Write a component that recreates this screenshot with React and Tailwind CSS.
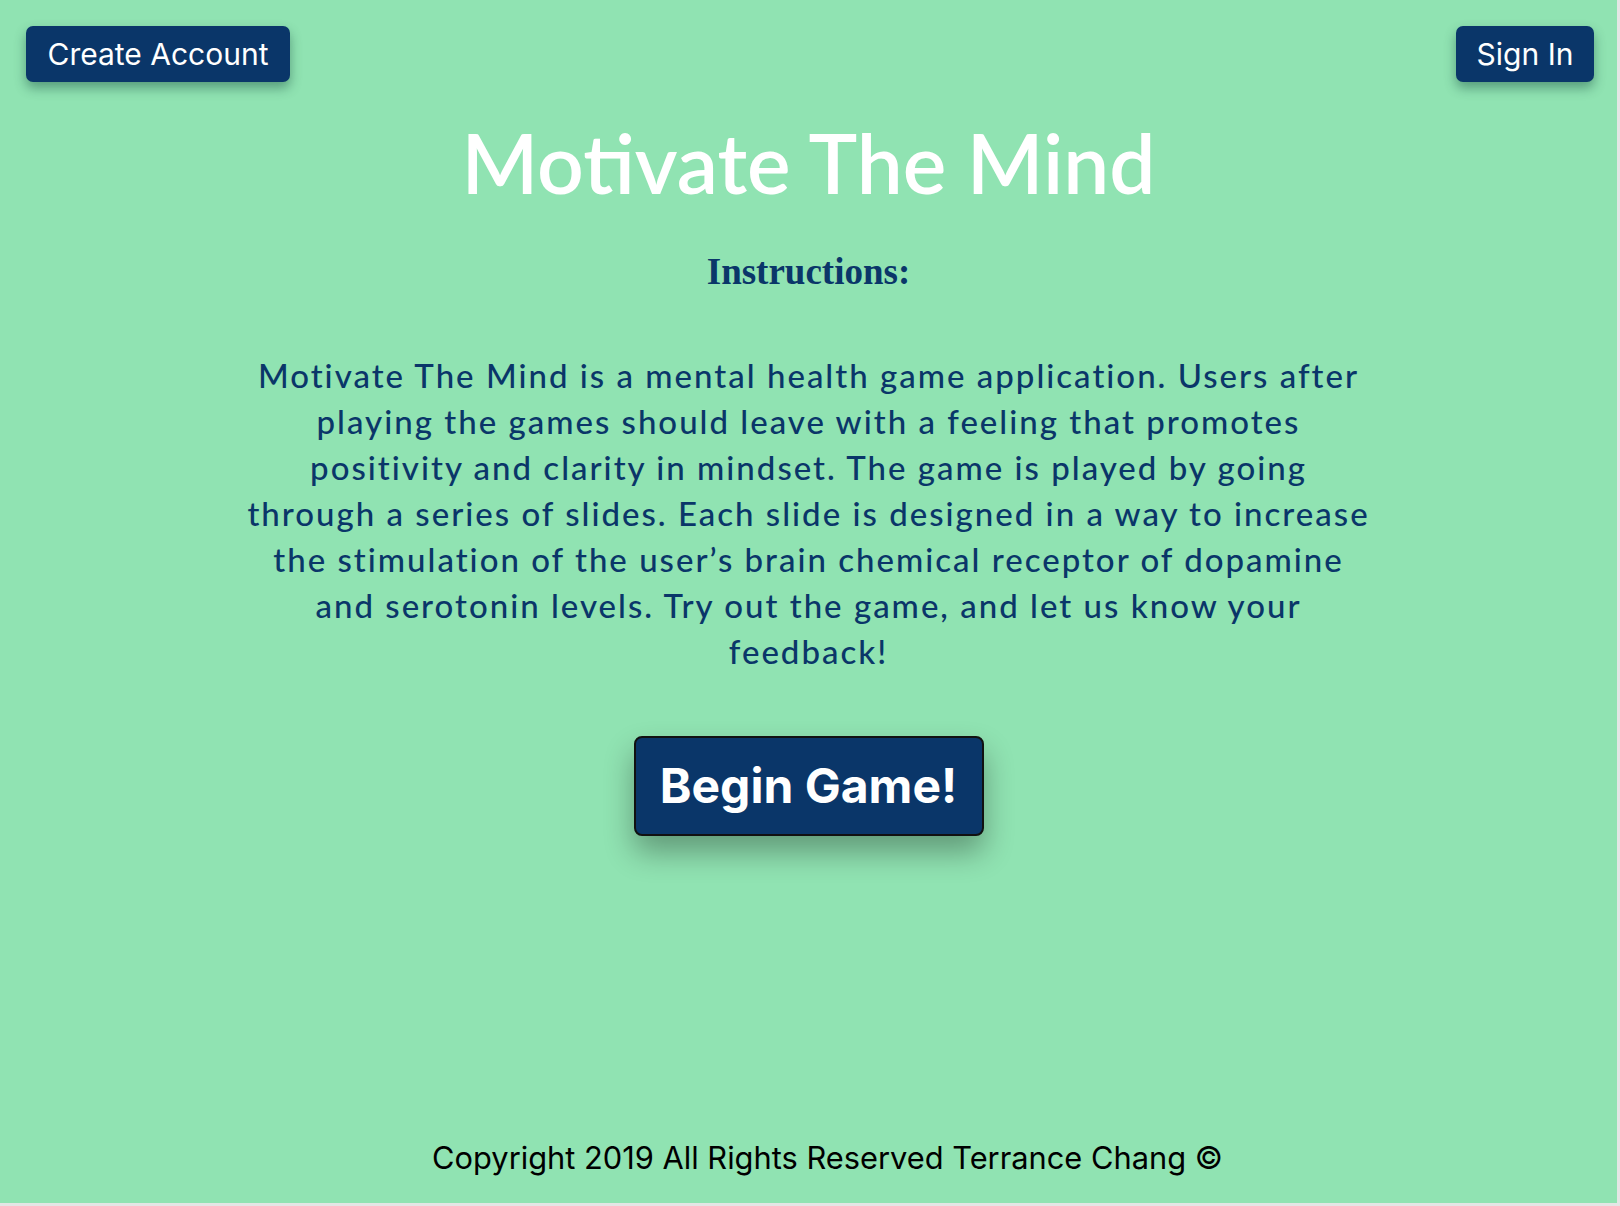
import React from 'react';

const lines = [
    'Motivate The Mind is a mental health game application. Users after',
    'playing the games should leave with a feeling that promotes',
    'positivity and clarity in mindset. The game is played by going',
    'through a series of slides. Each slide is designed in a way to increase',
    "the stimulation of the user\u2019s brain chemical receptor of dopamine",
    'and serotonin levels. Try out the game, and let us know your',
    'feedback!',
];

export default function App() {
    return (
        <div className="w-[1620px] h-[1206px] bg-[#e4e6e5] pr-[3px] pb-[3px]">
            <div className="h-full w-full bg-[#90e3b2] flex flex-col">
                {/* top bar with account buttons */}
                <div className="flex justify-between pl-[26px] pr-[23px] pt-[26px] font-['Inter',sans-serif]">
                    <button className="h-[56px] w-[264px] rounded-[7px] bg-[#0a3669] text-white text-[30px] shadow-[0_6px_12px_rgba(20,70,60,0.45)]">
                        Create Account
                    </button>
                    <button className="h-[56px] w-[138px] rounded-[7px] bg-[#0a3669] text-white text-[30px] shadow-[0_6px_12px_rgba(20,70,60,0.45)]">
                        Sign In
                    </button>
                </div>

                {/* title */}
                <h1 className="mt-[39px] text-center text-white text-[82px] leading-none font-semibold font-['Lato',sans-serif]">
                    Motivate The Mind
                </h1>

                <h2 className="mt-[50px] text-center text-[#0a3669] text-[37px] leading-none font-bold font-['Liberation_Serif',serif]">
                    Instructions:
                </h2>

                {/* description */}
                <p className="mt-[62px] text-center text-[#0a3669] text-[33px] leading-[46px] tracking-[2px] font-medium font-['Lato',sans-serif]">
                    {lines.map((l) => (
                        <span key={l} className="block whitespace-nowrap">
                            {l}
                        </span>
                    ))}
                </p>

                <div className="mt-[62px] flex justify-center">
                    <button className="h-[100px] w-[350px] rounded-[8px] border-2 border-[#111] bg-[#0a3669] text-white text-[48px] font-bold font-['Inter',sans-serif] shadow-[0_16px_30px_rgba(0,0,0,0.32)]">
                        Begin Game!
                    </button>
                </div>

                <div className="flex-1"></div>

                <footer className="pb-[22px] pl-[38px] text-center text-black text-[30.8px] font-['Inter',sans-serif]">
                    Copyright 2019 All Rights Reserved Terrance Chang ©
                </footer>
            </div>
        </div>
    );
}
